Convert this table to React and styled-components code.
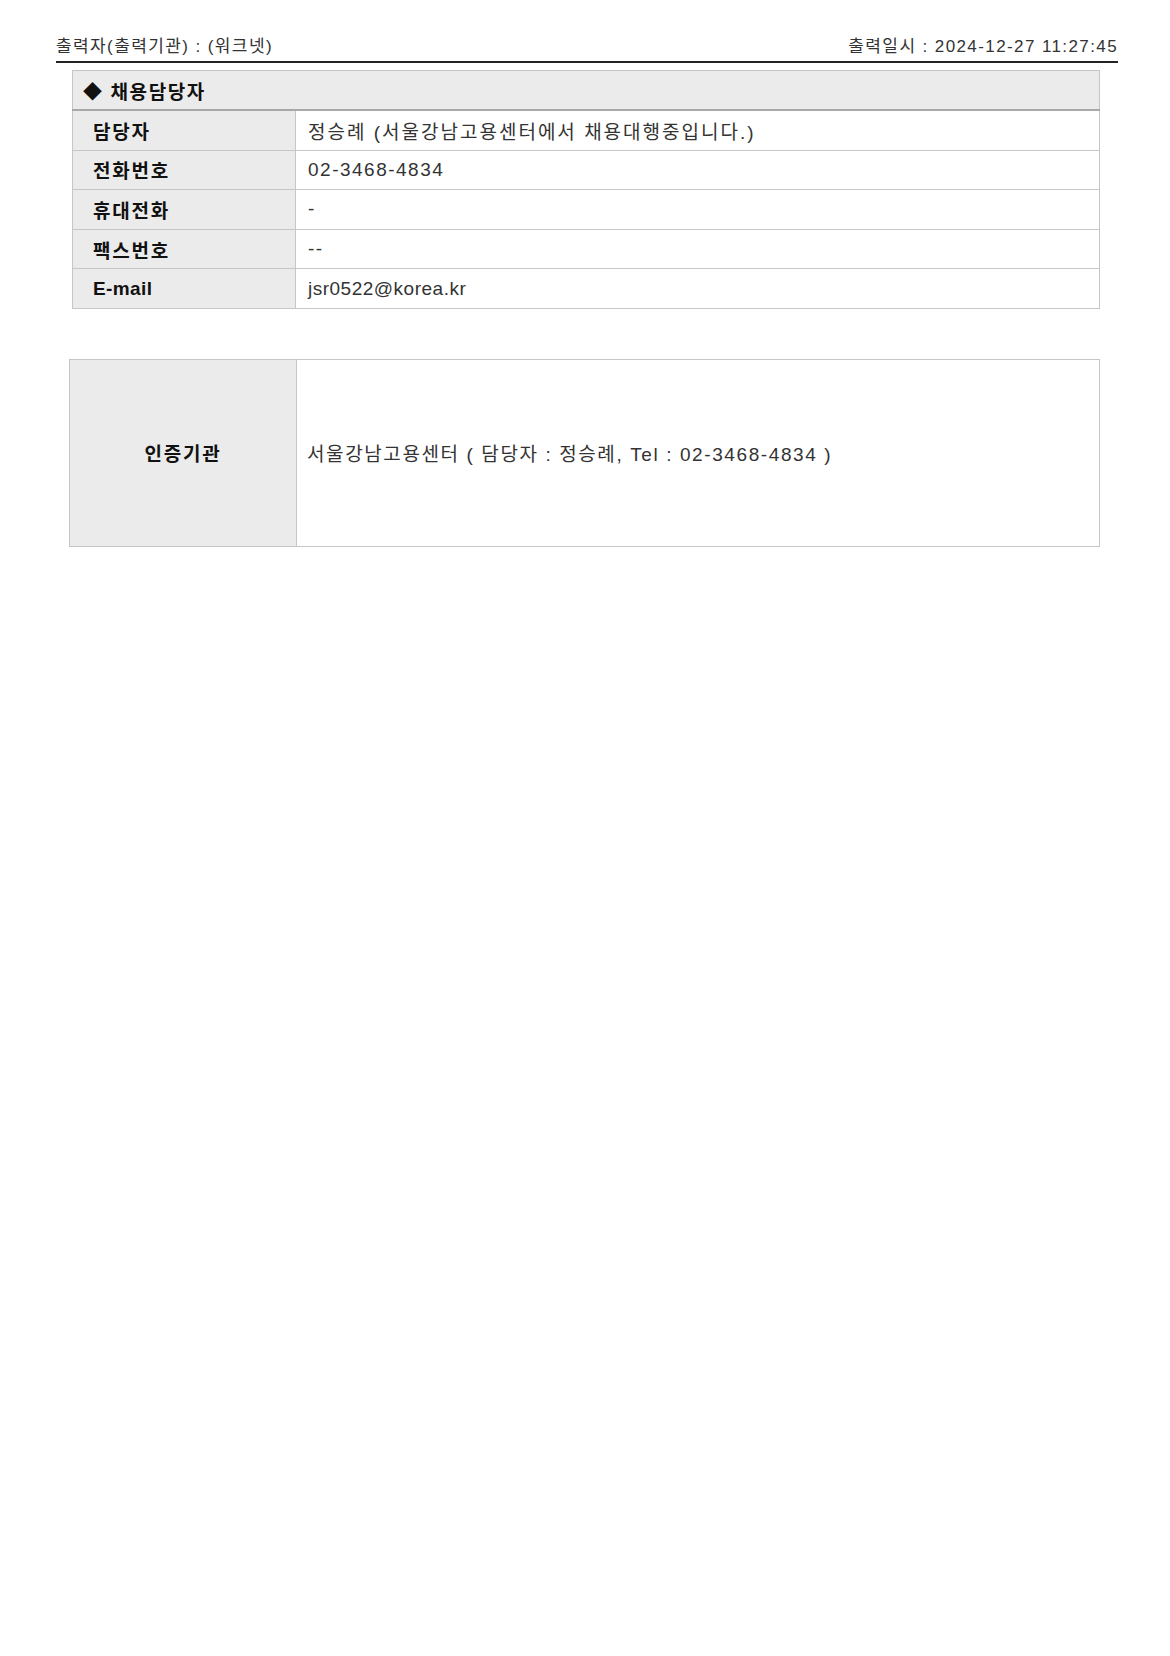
import React from "react";
import styled, { createGlobalStyle } from "styled-components";

const GlobalStyle = createGlobalStyle`
  html, body {
    margin: 0;
    padding: 0;
    background: #fff;
  }
  body {
    font-family: "Liberation Sans", "Noto Sans CJK KR", sans-serif;
    color: #222;
  }
`;

const contacts = [
  { label: "담당자", value: "정승례 (서울강남고용센터에서 채용대행중입니다.)", spacing: 2 },
  { label: "전화번호", value: "02-3468-4834", spacing: 1.5 },
  { label: "휴대전화", value: "-", spacing: 1.5 },
  { label: "팩스번호", value: "--", spacing: 1.5 },
  { label: "E-mail", value: "jsr0522@korea.kr", spacing: 0.5, latin: true },
];

const App = () => {
  return (
    <Page>
      <GlobalStyle />
      <PrintHeader>
        <span>출력자(출력기관) : (워크넷)</span>
        <span>출력일시 : 2024-12-27 11:27:45</span>
      </PrintHeader>

      <ContactTable>
        <colgroup>
          <col style={{ width: 223 }} />
          <col />
        </colgroup>
        <thead>
          <tr>
            <SectionTitle colSpan={2}>◆ 채용담당자</SectionTitle>
          </tr>
        </thead>
        <tbody>
          {contacts.map((row) => (
            <tr key={row.label}>
              <LabelCell $latin={row.latin}>{row.label}</LabelCell>
              <ValueCell $spacing={row.spacing}>{row.value}</ValueCell>
            </tr>
          ))}
        </tbody>
      </ContactTable>

      <CertTable>
        <colgroup>
          <col style={{ width: 227 }} />
          <col />
        </colgroup>
        <tbody>
          <tr>
            <CertLabel>인증기관</CertLabel>
            <CertValue>
              서울강남고용센터 ( 담당자 : 정승례, Tel : 02-3468-4834 )
            </CertValue>
          </tr>
        </tbody>
      </CertTable>
    </Page>
  );
};

export default App;

const Page = styled.div`
  width: 1170px;
  min-height: 1656px;
  box-sizing: border-box;
  padding: 37px 52px 0 56px;
`;

const PrintHeader = styled.div`
  display: flex;
  justify-content: space-between;
  align-items: flex-end;
  font-size: 17px;
  letter-spacing: 1.4px;
  color: #333;
  padding: 0 0 4px 0;
  border-bottom: 2px solid #222;
  line-height: 20px;
`;

const ContactTable = styled.table`
  width: 1028px;
  margin: 7px 0 0 16px;
  border-collapse: collapse;
  table-layout: fixed;
  font-size: 19px;
  border: 1px solid #c6c6c6;
`;

const SectionTitle = styled.th`
  height: 38px;
  padding: 0 0 0 10px;
  text-align: left;
  font-weight: 700;
  letter-spacing: 1.6px;
  color: #111;
  background: #ebebeb;
  border-bottom: 2px solid #a8a8a8;
`;

const LabelCell = styled.th`
  height: 38.6px;
  padding: 0 0 0 20px;
  text-align: left;
  font-weight: 700;
  letter-spacing: ${({ $latin }) => ($latin ? 0.4 : 1.8)}px;
  color: #111;
  background: #ebebeb;
  border: 1px solid #c6c6c6;
`;

const ValueCell = styled.td`
  height: 38.6px;
  padding: 0 0 0 12px;
  letter-spacing: ${({ $spacing }) => $spacing}px;
  color: #333;
  background: #fff;
  border: 1px solid #c6c6c6;
`;

const CertTable = styled.table`
  width: 1031px;
  margin: 50px 0 0 13px;
  border-collapse: collapse;
  table-layout: fixed;
  font-size: 19px;
  border: 1px solid #c6c6c6;
`;

const CertLabel = styled.th`
  height: 186px;
  padding: 0;
  text-align: center;
  font-weight: 700;
  letter-spacing: 1.8px;
  color: #111;
  background: #ebebeb;
  border: 1px solid #c6c6c6;
`;

const CertValue = styled.td`
  padding: 0 0 0 10px;
  letter-spacing: 1.6px;
  color: #333;
  border: 1px solid #c6c6c6;
`;
